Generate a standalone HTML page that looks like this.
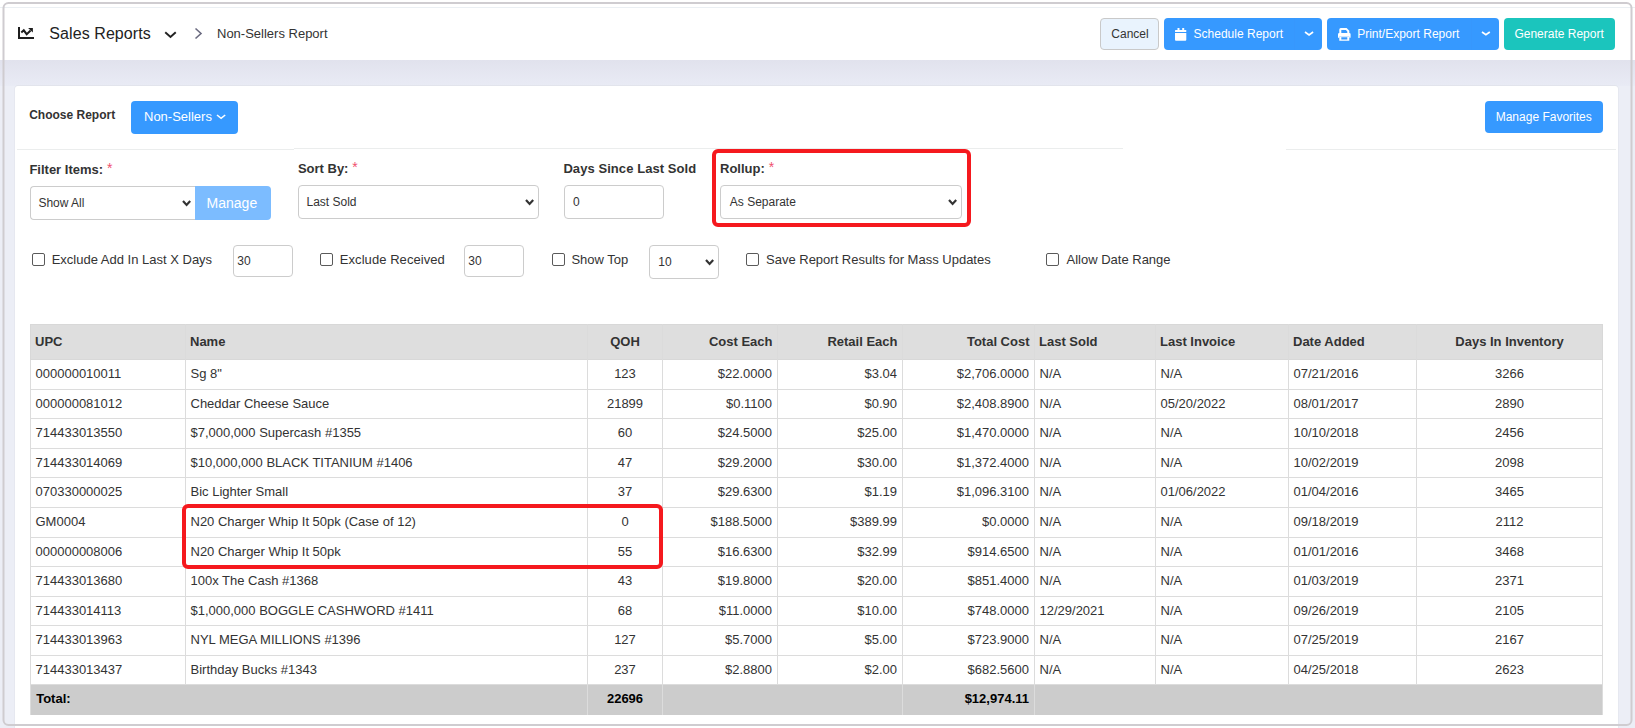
<!DOCTYPE html>
<html><head><meta charset="utf-8"><title>Non-Sellers Report</title>
<style>
html,body{margin:0;padding:0}
body{width:1635px;height:728px;overflow:hidden;position:relative;background:#eceef6;font-family:"Liberation Sans", sans-serif}
.t{position:absolute;white-space:nowrap}
.b{position:absolute}
</style></head><body>
<div class="b" style="left:0;top:0;width:1635px;height:60px;background:#fff"></div>
<div class="b" style="left:0px;top:7px;width:1635px;height:1px;background:#ebeff3"></div>
<div class="b" style="left:0px;top:60px;width:1635px;height:26px;background:linear-gradient(#e1e2ed,#e9ebf5)"></div>
<svg class="b" style="left:18px;top:27px" width="16" height="12" viewBox="0 0 16 12"><rect x="0" y="0" width="2" height="12" fill="#1e1e1e"/><rect x="0" y="10" width="16" height="2" fill="#1e1e1e"/><polyline points="3.3,5.6 5.8,3.3 8.7,7.2 12.6,3.6" fill="none" stroke="#1e1e1e" stroke-width="2"/><polygon points="10.1,1.1 14.9,1.1 14.9,5.6" fill="#1e1e1e"/></svg>
<div class="t" style="left:49.3px;top:26.46px;font-size:16px;line-height:16px;font-weight:normal;color:#222;letter-spacing:0.08px">Sales Reports</div>
<svg class="b" style="left:163px;top:30px" width="15" height="10" viewBox="-2 -2 15 10"><polyline points="1.0,1.0 5.5,5.0 10.0,1.0" fill="none" stroke="#222" stroke-width="2" stroke-linecap="square"/></svg>
<svg class="b" style="left:193.6px;top:27px" width="9" height="13" viewBox="0 0 9 13"><polyline points="1.5,1.5 7,6.5 1.5,11.5" fill="none" stroke="#6b6b80" stroke-width="1.6"/></svg>
<div class="t" style="left:217px;top:27.00px;font-size:13px;line-height:13px;font-weight:normal;color:#333;">Non-Sellers Report</div>
<div class="b" style="left:1100px;top:18px;width:59px;height:32px;box-sizing:border-box;border:1px solid #c9c9c9;border-radius:4px;background:#e9f3fd"></div>
<div class="t" style="left:930px;width:400px;text-align:center;top:27.84px;font-size:12px;line-height:12px;font-weight:normal;color:#333">Cancel</div>
<div class="b" style="left:1164px;top:18px;width:158px;height:32px;border-radius:4px;background:#3699ff"></div>
<div class="b" style="left:1294px;top:18px;width:1px;height:32px;background:#3797fd"></div>
<svg class="b" style="left:1175px;top:28px" width="12" height="13" viewBox="0 0 12 13"><rect x="2.5" y="0" width="2" height="2" fill="#fff"/><rect x="7.2" y="0" width="2" height="2" fill="#fff"/><rect x="0" y="2" width="11.3" height="2" rx="0.6" fill="#fff"/><path d="M0 5 H11.3 V11.8 Q11.3 12.8 10.3 12.8 H1 Q0 12.8 0 11.8 Z" fill="#fff"/></svg>
<div class="t" style="left:1193.6px;top:27.84px;font-size:12px;line-height:12px;font-weight:normal;color:#fff;">Schedule Report</div>
<svg class="b" style="left:1301.95px;top:29.40px" width="14.10" height="8.90" viewBox="0 0 14.10 8.90"><polyline points="3,3 7.05,5.90 11.10,3" fill="none" stroke="#fff" stroke-width="1.7" stroke-linecap="butt" stroke-linejoin="miter"/></svg>
<div class="b" style="left:1327px;top:18px;width:172px;height:32px;border-radius:4px;background:#3699ff"></div>
<div class="b" style="left:1471px;top:18px;width:1px;height:32px;background:#3797fd"></div>
<svg class="b" style="left:1338px;top:28px" width="13" height="13" viewBox="0 0 13 13"><path d="M1.3 5 V1.5 Q1.3 0 2.8 0 H8.6 L11.3 2.7 V5 H9.3 V3.4 L7.9 2 H3.3 V5 Z" fill="#fff"/><path d="M0 6.2 Q0 4.9 1.3 4.9 H11.3 Q12.6 4.9 12.6 6.2 V9.8 H11.3 V8.8 Q11.3 8.6 11 8.6 H1.6 Q1.3 8.6 1.3 8.8 V9.8 H0 Z" fill="#fff"/><path d="M1.3 8.6 H11.3 V12.8 H1.3 Z M3.3 9.3 V11.5 H9.3 V9.3 Z" fill="#fff" fill-rule="evenodd"/></svg>
<div class="t" style="left:1357.2px;top:27.84px;font-size:12px;line-height:12px;font-weight:normal;color:#fff;">Print/Export Report</div>
<svg class="b" style="left:1478.90px;top:29.40px" width="13.80" height="8.80" viewBox="0 0 13.80 8.80"><polyline points="3,3 6.90,5.80 10.80,3" fill="none" stroke="#fff" stroke-width="1.7" stroke-linecap="butt" stroke-linejoin="miter"/></svg>
<div class="b" style="left:1504px;top:18px;width:111px;height:32px;border-radius:4px;background:#1bc5bd"></div>
<div class="t" style="left:1514.4px;top:27.84px;font-size:12px;line-height:12px;font-weight:normal;color:#fff;">Generate Report</div>
<div class="b" style="left:15px;top:86px;width:1603px;height:700px;border-radius:3px;background:#fff;box-shadow:0 -1px 0 #e2e4ec, -1px 0 0 #e6e8f0, 1px 0 0 #e6e8f0"></div>
<div class="t" style="left:29.2px;top:108.84px;font-size:12px;line-height:12px;font-weight:bold;color:#333;">Choose Report</div>
<div class="b" style="left:131px;top:101px;width:107px;height:33px;border-radius:4px;background:#3699ff"></div>
<div class="t" style="left:144px;top:110.00px;font-size:13px;line-height:13px;font-weight:normal;color:#fff;">Non-Sellers</div>
<svg class="b" style="left:214.30px;top:112.30px" width="14.20" height="9.30" viewBox="0 0 14.20 9.30"><polyline points="3,3 7.10,6.30 11.20,3" fill="none" stroke="#fff" stroke-width="1.6" stroke-linecap="butt" stroke-linejoin="miter"/></svg>
<div class="b" style="left:1485px;top:101px;width:118px;height:32px;border-radius:4px;background:#3699ff"></div>
<div class="t" style="left:1495.7px;top:110.84px;font-size:12px;line-height:12px;font-weight:normal;color:#fff;">Manage Favorites</div>
<div class="b" style="left:17px;top:149px;width:277px;height:1px;background:#ebeded"></div>
<div class="b" style="left:294px;top:148px;width:829px;height:1px;background:#ebeded"></div>
<div class="b" style="left:1286px;top:149px;width:330px;height:1px;background:#ebeded"></div>
<div class="t" style="left:29.4px;top:163.00px;font-size:13px;line-height:13px;font-weight:bold;color:#333;">Filter Items:<span style="color:#f0506e;font-weight:normal;font-size:14px;position:relative;top:-1px"> *</span></div>
<div class="b" style="left:30px;top:186px;width:166px;height:34px;box-sizing:border-box;border:1px solid #ccc;border-right:none;border-radius:4px 0 0 4px;background:#fff"></div>
<div class="t" style="left:38.4px;top:196.84px;font-size:12px;line-height:12px;font-weight:normal;color:#333;">Show All</div>
<svg class="b" style="left:180.40px;top:198.00px" width="13.20" height="9.90" viewBox="0 0 13.20 9.90"><polyline points="3,3 6.60,6.90 10.20,3" fill="none" stroke="#333" stroke-width="2.2" stroke-linecap="butt" stroke-linejoin="miter"/></svg>
<div class="b" style="left:195px;top:186px;width:76px;height:34px;border-radius:0 4px 4px 0;background:#7cbcff"></div>
<div class="t" style="left:206.6px;top:196.15px;font-size:14px;line-height:14px;font-weight:normal;color:#fff;">Manage</div>
<div class="t" style="left:297.9px;top:162.00px;font-size:13px;line-height:13px;font-weight:bold;color:#333;">Sort By:<span style="color:#f0506e;font-weight:normal;font-size:14px;position:relative;top:-1px"> *</span></div>
<div class="b" style="left:298px;top:185px;width:241px;height:34px;box-sizing:border-box;border:1px solid #ccc;border-radius:4px;background:#fff"></div>
<div class="t" style="left:306.5px;top:195.84px;font-size:12px;line-height:12px;font-weight:normal;color:#333;">Last Sold</div>
<svg class="b" style="left:523.40px;top:196.90px" width="13.20" height="9.90" viewBox="0 0 13.20 9.90"><polyline points="3,3 6.60,6.90 10.20,3" fill="none" stroke="#333" stroke-width="2.2" stroke-linecap="butt" stroke-linejoin="miter"/></svg>
<div class="t" style="left:563.4px;top:162.00px;font-size:13px;line-height:13px;font-weight:bold;color:#333;letter-spacing:0.07px">Days Since Last Sold</div>
<div class="b" style="left:564px;top:185px;width:100px;height:34px;box-sizing:border-box;border:1px solid #ccc;border-radius:4px;background:#fff"></div>
<div class="t" style="left:572.9px;top:195.84px;font-size:12px;line-height:12px;font-weight:normal;color:#333;">0</div>
<div class="t" style="left:720px;top:162.00px;font-size:13px;line-height:13px;font-weight:bold;color:#333;">Rollup:<span style="color:#f0506e;font-weight:normal;font-size:14px;position:relative;top:-1px"> *</span></div>
<div class="b" style="left:720px;top:185px;width:242px;height:34px;box-sizing:border-box;border:1px solid #ccc;border-radius:4px;background:#fff"></div>
<div class="t" style="left:729.8px;top:195.84px;font-size:12px;line-height:12px;font-weight:normal;color:#333;">As Separate</div>
<svg class="b" style="left:946.40px;top:196.90px" width="13.20" height="9.90" viewBox="0 0 13.20 9.90"><polyline points="3,3 6.60,6.90 10.20,3" fill="none" stroke="#333" stroke-width="2.2" stroke-linecap="butt" stroke-linejoin="miter"/></svg>
<div class="b" style="left:712px;top:149px;width:259px;height:78px;box-sizing:border-box;border:4px solid #f5191e;border-radius:6px"></div>
<div class="b" style="left:32px;top:253px;width:13px;height:13px;box-sizing:border-box;border:1px solid #5a5a5a;border-radius:2px;background:#fff"></div>
<div class="t" style="left:51.7px;top:253.00px;font-size:13px;line-height:13px;font-weight:normal;color:#333;">Exclude Add In Last X Days</div>
<div class="b" style="left:233px;top:245px;width:60px;height:32px;box-sizing:border-box;border:1px solid #ccc;border-radius:4px;background:#fff"></div>
<div class="t" style="left:237.3px;top:254.84px;font-size:12px;line-height:12px;font-weight:normal;color:#333;">30</div>
<div class="b" style="left:320px;top:253px;width:13px;height:13px;box-sizing:border-box;border:1px solid #5a5a5a;border-radius:2px;background:#fff"></div>
<div class="t" style="left:339.8px;top:253.00px;font-size:13px;line-height:13px;font-weight:normal;color:#333;letter-spacing:0.06px">Exclude Received</div>
<div class="b" style="left:464px;top:245px;width:60px;height:32px;box-sizing:border-box;border:1px solid #ccc;border-radius:4px;background:#fff"></div>
<div class="t" style="left:468.3px;top:254.84px;font-size:12px;line-height:12px;font-weight:normal;color:#333;">30</div>
<div class="b" style="left:552px;top:253px;width:13px;height:13px;box-sizing:border-box;border:1px solid #5a5a5a;border-radius:2px;background:#fff"></div>
<div class="t" style="left:571.4px;top:253.00px;font-size:13px;line-height:13px;font-weight:normal;color:#333;">Show Top</div>
<div class="b" style="left:649px;top:245px;width:70px;height:34px;box-sizing:border-box;border:1px solid #ccc;border-radius:4px;background:#fff"></div>
<div class="t" style="left:658.3px;top:255.84px;font-size:12px;line-height:12px;font-weight:normal;color:#333;">10</div>
<svg class="b" style="left:703.40px;top:257.00px" width="13.20" height="9.90" viewBox="0 0 13.20 9.90"><polyline points="3,3 6.60,6.90 10.20,3" fill="none" stroke="#333" stroke-width="2.2" stroke-linecap="butt" stroke-linejoin="miter"/></svg>
<div class="b" style="left:746px;top:253px;width:13px;height:13px;box-sizing:border-box;border:1px solid #5a5a5a;border-radius:2px;background:#fff"></div>
<div class="t" style="left:766px;top:253.00px;font-size:13px;line-height:13px;font-weight:normal;color:#333;">Save Report Results for Mass Updates</div>
<div class="b" style="left:1046px;top:253px;width:13px;height:13px;box-sizing:border-box;border:1px solid #5a5a5a;border-radius:2px;background:#fff"></div>
<div class="t" style="left:1066.5px;top:253.00px;font-size:13px;line-height:13px;font-weight:normal;color:#333;">Allow Date Range</div>
<div class="b" style="left:30px;top:324px;width:1573px;height:36px;background:#dedede"></div>
<div class="t" style="left:35px;top:335.00px;font-size:13px;line-height:13px;font-weight:bold;color:#333;">UPC</div>
<div class="t" style="left:190px;top:335.00px;font-size:13px;line-height:13px;font-weight:bold;color:#333;">Name</div>
<div class="t" style="left:425.0px;width:400px;text-align:center;top:335.00px;font-size:13px;line-height:13px;font-weight:bold;color:#333">QOH</div>
<div class="t" style="right:862.5px;top:335.00px;font-size:13px;line-height:13px;font-weight:bold;color:#333">Cost Each</div>
<div class="t" style="right:737.5px;top:335.00px;font-size:13px;line-height:13px;font-weight:bold;color:#333">Retail Each</div>
<div class="t" style="right:605.5px;top:335.00px;font-size:13px;line-height:13px;font-weight:bold;color:#333">Total Cost</div>
<div class="t" style="left:1039px;top:335.00px;font-size:13px;line-height:13px;font-weight:bold;color:#333;">Last Sold</div>
<div class="t" style="left:1160px;top:335.00px;font-size:13px;line-height:13px;font-weight:bold;color:#333;">Last Invoice</div>
<div class="t" style="left:1293px;top:335.00px;font-size:13px;line-height:13px;font-weight:bold;color:#333;">Date Added</div>
<div class="t" style="left:1309.5px;width:400px;text-align:center;top:335.00px;font-size:13px;line-height:13px;font-weight:bold;color:#333">Days In Inventory</div>
<div class="t" style="left:35.5px;top:367.00px;font-size:13px;line-height:13px;font-weight:normal;color:#333;">000000010011</div>
<div class="t" style="left:190.5px;top:367.00px;font-size:13px;line-height:13px;font-weight:normal;color:#333;">Sg 8"</div>
<div class="t" style="left:425.0px;width:400px;text-align:center;top:367.00px;font-size:13px;line-height:13px;font-weight:normal;color:#333">123</div>
<div class="t" style="right:863px;top:367.00px;font-size:13px;line-height:13px;font-weight:normal;color:#333">$22.0000</div>
<div class="t" style="right:738px;top:367.00px;font-size:13px;line-height:13px;font-weight:normal;color:#333">$3.04</div>
<div class="t" style="right:606px;top:367.00px;font-size:13px;line-height:13px;font-weight:normal;color:#333">$2,706.0000</div>
<div class="t" style="left:1039.5px;top:367.00px;font-size:13px;line-height:13px;font-weight:normal;color:#333;">N/A</div>
<div class="t" style="left:1160.5px;top:367.00px;font-size:13px;line-height:13px;font-weight:normal;color:#333;">N/A</div>
<div class="t" style="left:1293.5px;top:367.00px;font-size:13px;line-height:13px;font-weight:normal;color:#333;">07/21/2016</div>
<div class="t" style="left:1309.5px;width:400px;text-align:center;top:367.00px;font-size:13px;line-height:13px;font-weight:normal;color:#333">3266</div>
<div class="t" style="left:35.5px;top:397.00px;font-size:13px;line-height:13px;font-weight:normal;color:#333;">000000081012</div>
<div class="t" style="left:190.5px;top:397.00px;font-size:13px;line-height:13px;font-weight:normal;color:#333;">Cheddar Cheese Sauce</div>
<div class="t" style="left:425.0px;width:400px;text-align:center;top:397.00px;font-size:13px;line-height:13px;font-weight:normal;color:#333">21899</div>
<div class="t" style="right:863px;top:397.00px;font-size:13px;line-height:13px;font-weight:normal;color:#333">$0.1100</div>
<div class="t" style="right:738px;top:397.00px;font-size:13px;line-height:13px;font-weight:normal;color:#333">$0.90</div>
<div class="t" style="right:606px;top:397.00px;font-size:13px;line-height:13px;font-weight:normal;color:#333">$2,408.8900</div>
<div class="t" style="left:1039.5px;top:397.00px;font-size:13px;line-height:13px;font-weight:normal;color:#333;">N/A</div>
<div class="t" style="left:1160.5px;top:397.00px;font-size:13px;line-height:13px;font-weight:normal;color:#333;">05/20/2022</div>
<div class="t" style="left:1293.5px;top:397.00px;font-size:13px;line-height:13px;font-weight:normal;color:#333;">08/01/2017</div>
<div class="t" style="left:1309.5px;width:400px;text-align:center;top:397.00px;font-size:13px;line-height:13px;font-weight:normal;color:#333">2890</div>
<div class="t" style="left:35.5px;top:426.00px;font-size:13px;line-height:13px;font-weight:normal;color:#333;">714433013550</div>
<div class="t" style="left:190.5px;top:426.00px;font-size:13px;line-height:13px;font-weight:normal;color:#333;">$7,000,000 Supercash #1355</div>
<div class="t" style="left:425.0px;width:400px;text-align:center;top:426.00px;font-size:13px;line-height:13px;font-weight:normal;color:#333">60</div>
<div class="t" style="right:863px;top:426.00px;font-size:13px;line-height:13px;font-weight:normal;color:#333">$24.5000</div>
<div class="t" style="right:738px;top:426.00px;font-size:13px;line-height:13px;font-weight:normal;color:#333">$25.00</div>
<div class="t" style="right:606px;top:426.00px;font-size:13px;line-height:13px;font-weight:normal;color:#333">$1,470.0000</div>
<div class="t" style="left:1039.5px;top:426.00px;font-size:13px;line-height:13px;font-weight:normal;color:#333;">N/A</div>
<div class="t" style="left:1160.5px;top:426.00px;font-size:13px;line-height:13px;font-weight:normal;color:#333;">N/A</div>
<div class="t" style="left:1293.5px;top:426.00px;font-size:13px;line-height:13px;font-weight:normal;color:#333;">10/10/2018</div>
<div class="t" style="left:1309.5px;width:400px;text-align:center;top:426.00px;font-size:13px;line-height:13px;font-weight:normal;color:#333">2456</div>
<div class="t" style="left:35.5px;top:456.00px;font-size:13px;line-height:13px;font-weight:normal;color:#333;">714433014069</div>
<div class="t" style="left:190.5px;top:456.00px;font-size:13px;line-height:13px;font-weight:normal;color:#333;">$10,000,000 BLACK TITANIUM #1406</div>
<div class="t" style="left:425.0px;width:400px;text-align:center;top:456.00px;font-size:13px;line-height:13px;font-weight:normal;color:#333">47</div>
<div class="t" style="right:863px;top:456.00px;font-size:13px;line-height:13px;font-weight:normal;color:#333">$29.2000</div>
<div class="t" style="right:738px;top:456.00px;font-size:13px;line-height:13px;font-weight:normal;color:#333">$30.00</div>
<div class="t" style="right:606px;top:456.00px;font-size:13px;line-height:13px;font-weight:normal;color:#333">$1,372.4000</div>
<div class="t" style="left:1039.5px;top:456.00px;font-size:13px;line-height:13px;font-weight:normal;color:#333;">N/A</div>
<div class="t" style="left:1160.5px;top:456.00px;font-size:13px;line-height:13px;font-weight:normal;color:#333;">N/A</div>
<div class="t" style="left:1293.5px;top:456.00px;font-size:13px;line-height:13px;font-weight:normal;color:#333;">10/02/2019</div>
<div class="t" style="left:1309.5px;width:400px;text-align:center;top:456.00px;font-size:13px;line-height:13px;font-weight:normal;color:#333">2098</div>
<div class="t" style="left:35.5px;top:485.00px;font-size:13px;line-height:13px;font-weight:normal;color:#333;">070330000025</div>
<div class="t" style="left:190.5px;top:485.00px;font-size:13px;line-height:13px;font-weight:normal;color:#333;">Bic Lighter Small</div>
<div class="t" style="left:425.0px;width:400px;text-align:center;top:485.00px;font-size:13px;line-height:13px;font-weight:normal;color:#333">37</div>
<div class="t" style="right:863px;top:485.00px;font-size:13px;line-height:13px;font-weight:normal;color:#333">$29.6300</div>
<div class="t" style="right:738px;top:485.00px;font-size:13px;line-height:13px;font-weight:normal;color:#333">$1.19</div>
<div class="t" style="right:606px;top:485.00px;font-size:13px;line-height:13px;font-weight:normal;color:#333">$1,096.3100</div>
<div class="t" style="left:1039.5px;top:485.00px;font-size:13px;line-height:13px;font-weight:normal;color:#333;">N/A</div>
<div class="t" style="left:1160.5px;top:485.00px;font-size:13px;line-height:13px;font-weight:normal;color:#333;">01/06/2022</div>
<div class="t" style="left:1293.5px;top:485.00px;font-size:13px;line-height:13px;font-weight:normal;color:#333;">01/04/2016</div>
<div class="t" style="left:1309.5px;width:400px;text-align:center;top:485.00px;font-size:13px;line-height:13px;font-weight:normal;color:#333">3465</div>
<div class="t" style="left:35.5px;top:515.00px;font-size:13px;line-height:13px;font-weight:normal;color:#333;">GM0004</div>
<div class="t" style="left:190.5px;top:515.00px;font-size:13px;line-height:13px;font-weight:normal;color:#333;">N20 Charger Whip It 50pk (Case of 12)</div>
<div class="t" style="left:425.0px;width:400px;text-align:center;top:515.00px;font-size:13px;line-height:13px;font-weight:normal;color:#333">0</div>
<div class="t" style="right:863px;top:515.00px;font-size:13px;line-height:13px;font-weight:normal;color:#333">$188.5000</div>
<div class="t" style="right:738px;top:515.00px;font-size:13px;line-height:13px;font-weight:normal;color:#333">$389.99</div>
<div class="t" style="right:606px;top:515.00px;font-size:13px;line-height:13px;font-weight:normal;color:#333">$0.0000</div>
<div class="t" style="left:1039.5px;top:515.00px;font-size:13px;line-height:13px;font-weight:normal;color:#333;">N/A</div>
<div class="t" style="left:1160.5px;top:515.00px;font-size:13px;line-height:13px;font-weight:normal;color:#333;">N/A</div>
<div class="t" style="left:1293.5px;top:515.00px;font-size:13px;line-height:13px;font-weight:normal;color:#333;">09/18/2019</div>
<div class="t" style="left:1309.5px;width:400px;text-align:center;top:515.00px;font-size:13px;line-height:13px;font-weight:normal;color:#333">2112</div>
<div class="t" style="left:35.5px;top:545.00px;font-size:13px;line-height:13px;font-weight:normal;color:#333;">000000008006</div>
<div class="t" style="left:190.5px;top:545.00px;font-size:13px;line-height:13px;font-weight:normal;color:#333;">N20 Charger Whip It 50pk</div>
<div class="t" style="left:425.0px;width:400px;text-align:center;top:545.00px;font-size:13px;line-height:13px;font-weight:normal;color:#333">55</div>
<div class="t" style="right:863px;top:545.00px;font-size:13px;line-height:13px;font-weight:normal;color:#333">$16.6300</div>
<div class="t" style="right:738px;top:545.00px;font-size:13px;line-height:13px;font-weight:normal;color:#333">$32.99</div>
<div class="t" style="right:606px;top:545.00px;font-size:13px;line-height:13px;font-weight:normal;color:#333">$914.6500</div>
<div class="t" style="left:1039.5px;top:545.00px;font-size:13px;line-height:13px;font-weight:normal;color:#333;">N/A</div>
<div class="t" style="left:1160.5px;top:545.00px;font-size:13px;line-height:13px;font-weight:normal;color:#333;">N/A</div>
<div class="t" style="left:1293.5px;top:545.00px;font-size:13px;line-height:13px;font-weight:normal;color:#333;">01/01/2016</div>
<div class="t" style="left:1309.5px;width:400px;text-align:center;top:545.00px;font-size:13px;line-height:13px;font-weight:normal;color:#333">3468</div>
<div class="t" style="left:35.5px;top:574.00px;font-size:13px;line-height:13px;font-weight:normal;color:#333;">714433013680</div>
<div class="t" style="left:190.5px;top:574.00px;font-size:13px;line-height:13px;font-weight:normal;color:#333;">100x The Cash #1368</div>
<div class="t" style="left:425.0px;width:400px;text-align:center;top:574.00px;font-size:13px;line-height:13px;font-weight:normal;color:#333">43</div>
<div class="t" style="right:863px;top:574.00px;font-size:13px;line-height:13px;font-weight:normal;color:#333">$19.8000</div>
<div class="t" style="right:738px;top:574.00px;font-size:13px;line-height:13px;font-weight:normal;color:#333">$20.00</div>
<div class="t" style="right:606px;top:574.00px;font-size:13px;line-height:13px;font-weight:normal;color:#333">$851.4000</div>
<div class="t" style="left:1039.5px;top:574.00px;font-size:13px;line-height:13px;font-weight:normal;color:#333;">N/A</div>
<div class="t" style="left:1160.5px;top:574.00px;font-size:13px;line-height:13px;font-weight:normal;color:#333;">N/A</div>
<div class="t" style="left:1293.5px;top:574.00px;font-size:13px;line-height:13px;font-weight:normal;color:#333;">01/03/2019</div>
<div class="t" style="left:1309.5px;width:400px;text-align:center;top:574.00px;font-size:13px;line-height:13px;font-weight:normal;color:#333">2371</div>
<div class="t" style="left:35.5px;top:604.00px;font-size:13px;line-height:13px;font-weight:normal;color:#333;">714433014113</div>
<div class="t" style="left:190.5px;top:604.00px;font-size:13px;line-height:13px;font-weight:normal;color:#333;">$1,000,000 BOGGLE CASHWORD #1411</div>
<div class="t" style="left:425.0px;width:400px;text-align:center;top:604.00px;font-size:13px;line-height:13px;font-weight:normal;color:#333">68</div>
<div class="t" style="right:863px;top:604.00px;font-size:13px;line-height:13px;font-weight:normal;color:#333">$11.0000</div>
<div class="t" style="right:738px;top:604.00px;font-size:13px;line-height:13px;font-weight:normal;color:#333">$10.00</div>
<div class="t" style="right:606px;top:604.00px;font-size:13px;line-height:13px;font-weight:normal;color:#333">$748.0000</div>
<div class="t" style="left:1039.5px;top:604.00px;font-size:13px;line-height:13px;font-weight:normal;color:#333;">12/29/2021</div>
<div class="t" style="left:1160.5px;top:604.00px;font-size:13px;line-height:13px;font-weight:normal;color:#333;">N/A</div>
<div class="t" style="left:1293.5px;top:604.00px;font-size:13px;line-height:13px;font-weight:normal;color:#333;">09/26/2019</div>
<div class="t" style="left:1309.5px;width:400px;text-align:center;top:604.00px;font-size:13px;line-height:13px;font-weight:normal;color:#333">2105</div>
<div class="t" style="left:35.5px;top:633.00px;font-size:13px;line-height:13px;font-weight:normal;color:#333;">714433013963</div>
<div class="t" style="left:190.5px;top:633.00px;font-size:13px;line-height:13px;font-weight:normal;color:#333;">NYL MEGA MILLIONS #1396</div>
<div class="t" style="left:425.0px;width:400px;text-align:center;top:633.00px;font-size:13px;line-height:13px;font-weight:normal;color:#333">127</div>
<div class="t" style="right:863px;top:633.00px;font-size:13px;line-height:13px;font-weight:normal;color:#333">$5.7000</div>
<div class="t" style="right:738px;top:633.00px;font-size:13px;line-height:13px;font-weight:normal;color:#333">$5.00</div>
<div class="t" style="right:606px;top:633.00px;font-size:13px;line-height:13px;font-weight:normal;color:#333">$723.9000</div>
<div class="t" style="left:1039.5px;top:633.00px;font-size:13px;line-height:13px;font-weight:normal;color:#333;">N/A</div>
<div class="t" style="left:1160.5px;top:633.00px;font-size:13px;line-height:13px;font-weight:normal;color:#333;">N/A</div>
<div class="t" style="left:1293.5px;top:633.00px;font-size:13px;line-height:13px;font-weight:normal;color:#333;">07/25/2019</div>
<div class="t" style="left:1309.5px;width:400px;text-align:center;top:633.00px;font-size:13px;line-height:13px;font-weight:normal;color:#333">2167</div>
<div class="t" style="left:35.5px;top:663.00px;font-size:13px;line-height:13px;font-weight:normal;color:#333;">714433013437</div>
<div class="t" style="left:190.5px;top:663.00px;font-size:13px;line-height:13px;font-weight:normal;color:#333;">Birthday Bucks #1343</div>
<div class="t" style="left:425.0px;width:400px;text-align:center;top:663.00px;font-size:13px;line-height:13px;font-weight:normal;color:#333">237</div>
<div class="t" style="right:863px;top:663.00px;font-size:13px;line-height:13px;font-weight:normal;color:#333">$2.8800</div>
<div class="t" style="right:738px;top:663.00px;font-size:13px;line-height:13px;font-weight:normal;color:#333">$2.00</div>
<div class="t" style="right:606px;top:663.00px;font-size:13px;line-height:13px;font-weight:normal;color:#333">$682.5600</div>
<div class="t" style="left:1039.5px;top:663.00px;font-size:13px;line-height:13px;font-weight:normal;color:#333;">N/A</div>
<div class="t" style="left:1160.5px;top:663.00px;font-size:13px;line-height:13px;font-weight:normal;color:#333;">N/A</div>
<div class="t" style="left:1293.5px;top:663.00px;font-size:13px;line-height:13px;font-weight:normal;color:#333;">04/25/2018</div>
<div class="t" style="left:1309.5px;width:400px;text-align:center;top:663.00px;font-size:13px;line-height:13px;font-weight:normal;color:#333">2623</div>
<div class="b" style="left:30px;top:685px;width:1573px;height:30px;background:#cccccc"></div>
<div class="t" style="left:36.2px;top:692.00px;font-size:13px;line-height:13px;font-weight:bold;color:#000;">Total:</div>
<div class="t" style="left:425.0px;width:400px;text-align:center;top:692.00px;font-size:13px;line-height:13px;font-weight:bold;color:#000">22696</div>
<div class="t" style="right:606px;top:692.00px;font-size:13px;line-height:13px;font-weight:bold;color:#000">$12,974.11</div>
<div class="b" style="left:30px;top:359px;width:1573px;height:1px;background:#dcdcdc"></div>
<div class="b" style="left:30px;top:389px;width:1573px;height:1px;background:#dcdcdc"></div>
<div class="b" style="left:30px;top:418px;width:1573px;height:1px;background:#dcdcdc"></div>
<div class="b" style="left:30px;top:448px;width:1573px;height:1px;background:#dcdcdc"></div>
<div class="b" style="left:30px;top:477px;width:1573px;height:1px;background:#dcdcdc"></div>
<div class="b" style="left:30px;top:507px;width:1573px;height:1px;background:#dcdcdc"></div>
<div class="b" style="left:30px;top:537px;width:1573px;height:1px;background:#dcdcdc"></div>
<div class="b" style="left:30px;top:566px;width:1573px;height:1px;background:#dcdcdc"></div>
<div class="b" style="left:30px;top:596px;width:1573px;height:1px;background:#dcdcdc"></div>
<div class="b" style="left:30px;top:625px;width:1573px;height:1px;background:#dcdcdc"></div>
<div class="b" style="left:30px;top:655px;width:1573px;height:1px;background:#dcdcdc"></div>
<div class="b" style="left:30px;top:684px;width:1573px;height:1px;background:#dcdcdc"></div>
<div class="b" style="left:30px;top:324px;width:1573px;height:1px;background:#d8d8d8"></div>
<div class="b" style="left:30px;top:359px;width:1573px;height:1px;background:#d8d8d8"></div>
<div class="b" style="left:30px;top:360px;width:1px;height:324px;background:#dcdcdc"></div>
<div class="b" style="left:185px;top:360px;width:1px;height:324px;background:#dcdcdc"></div>
<div class="b" style="left:587px;top:360px;width:1px;height:324px;background:#dcdcdc"></div>
<div class="b" style="left:662px;top:360px;width:1px;height:324px;background:#dcdcdc"></div>
<div class="b" style="left:777px;top:360px;width:1px;height:324px;background:#dcdcdc"></div>
<div class="b" style="left:902px;top:360px;width:1px;height:324px;background:#dcdcdc"></div>
<div class="b" style="left:1034px;top:360px;width:1px;height:324px;background:#dcdcdc"></div>
<div class="b" style="left:1155px;top:360px;width:1px;height:324px;background:#dcdcdc"></div>
<div class="b" style="left:1288px;top:360px;width:1px;height:324px;background:#dcdcdc"></div>
<div class="b" style="left:1416px;top:360px;width:1px;height:324px;background:#dcdcdc"></div>
<div class="b" style="left:1602px;top:360px;width:1px;height:324px;background:#dcdcdc"></div>
<div class="b" style="left:185px;top:324px;width:1px;height:36px;background:#dbdbdb"></div>
<div class="b" style="left:587px;top:324px;width:1px;height:36px;background:#dbdbdb"></div>
<div class="b" style="left:662px;top:324px;width:1px;height:36px;background:#dbdbdb"></div>
<div class="b" style="left:777px;top:324px;width:1px;height:36px;background:#dbdbdb"></div>
<div class="b" style="left:902px;top:324px;width:1px;height:36px;background:#dbdbdb"></div>
<div class="b" style="left:1034px;top:324px;width:1px;height:36px;background:#dbdbdb"></div>
<div class="b" style="left:1155px;top:324px;width:1px;height:36px;background:#dbdbdb"></div>
<div class="b" style="left:1288px;top:324px;width:1px;height:36px;background:#dbdbdb"></div>
<div class="b" style="left:1416px;top:324px;width:1px;height:36px;background:#dbdbdb"></div>
<div class="b" style="left:30px;top:324px;width:1px;height:36px;background:#d8d8d8"></div>
<div class="b" style="left:1602px;top:324px;width:1px;height:36px;background:#d8d8d8"></div>
<div class="b" style="left:30px;top:685px;width:1px;height:30px;background:#dcdcdc"></div>
<div class="b" style="left:587px;top:685px;width:1px;height:30px;background:#dcdcdc"></div>
<div class="b" style="left:662px;top:685px;width:1px;height:30px;background:#dcdcdc"></div>
<div class="b" style="left:902px;top:685px;width:1px;height:30px;background:#dcdcdc"></div>
<div class="b" style="left:1034px;top:685px;width:1px;height:30px;background:#dcdcdc"></div>
<div class="b" style="left:1602px;top:685px;width:1px;height:30px;background:#dcdcdc"></div>
<div class="b" style="left:182px;top:504px;width:481px;height:65px;box-sizing:border-box;border:4px solid #f5191e;border-radius:6px"></div>
<svg class="b" style="left:0;top:0" width="1635" height="728"><rect x="3.5" y="3" width="1628" height="722" rx="5" ry="5" fill="none" stroke="#cfccd0" stroke-width="2"/></svg>
</body></html>
